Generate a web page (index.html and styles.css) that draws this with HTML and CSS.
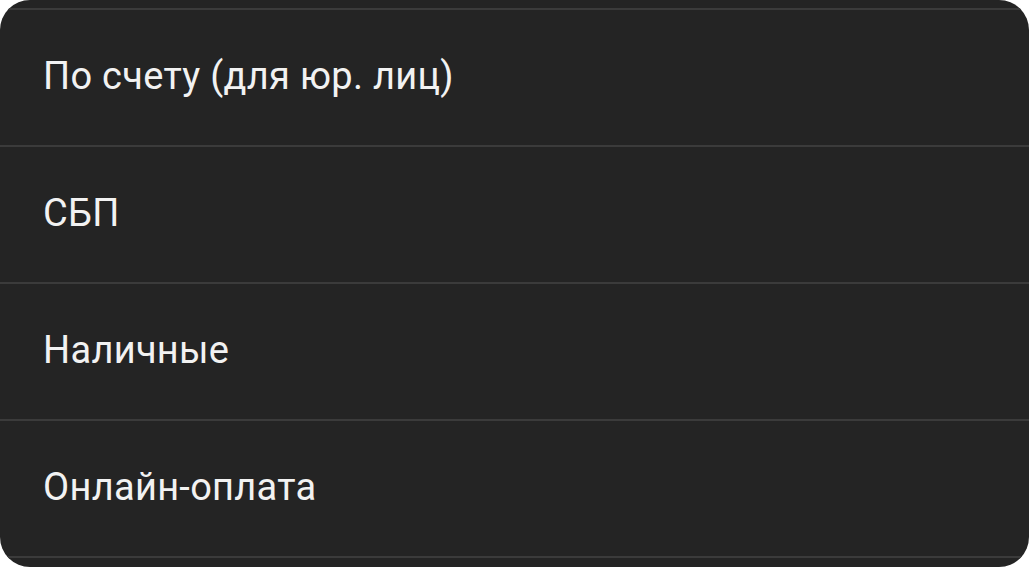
FILE: index.html
```html
<!DOCTYPE html>
<html lang="ru">
<head>
<meta charset="utf-8">
<link rel="stylesheet" href="styles.css">
</head>
<body>
<div class="sheet">
  <ul class="options">
    <li class="option">По счету (для юр. лиц)</li>
    <li class="option">СБП</li>
    <li class="option">Наличные</li>
    <li class="option">Онлайн-оплата</li>
  </ul>
</div>
</body>
</html>
```
FILE: styles.css
```css
html, body {
  margin: 0;
  padding: 0;
  background: #ffffff;
}
.sheet {
  width: 1029px;
  height: 567px;
  background: #242424;
  border-radius: 30px;
  overflow: hidden;
  padding-top: 8px;
  box-sizing: border-box;
}
.options {
  list-style: none;
  margin: 0;
  padding: 0;
  border-bottom: 2px solid #3b3b3b;
}
.option {
  display: flex;
  align-items: center;
  box-sizing: border-box;
  height: 137px;
  padding-left: 43px;
  padding-bottom: 3px;
  border-top: 2px solid #3b3b3b;
  font-family: Roboto, "Noto Sans", sans-serif;
  font-size: 38px;
  letter-spacing: 0.3px;
  color: #f2f2f2;
}
```
